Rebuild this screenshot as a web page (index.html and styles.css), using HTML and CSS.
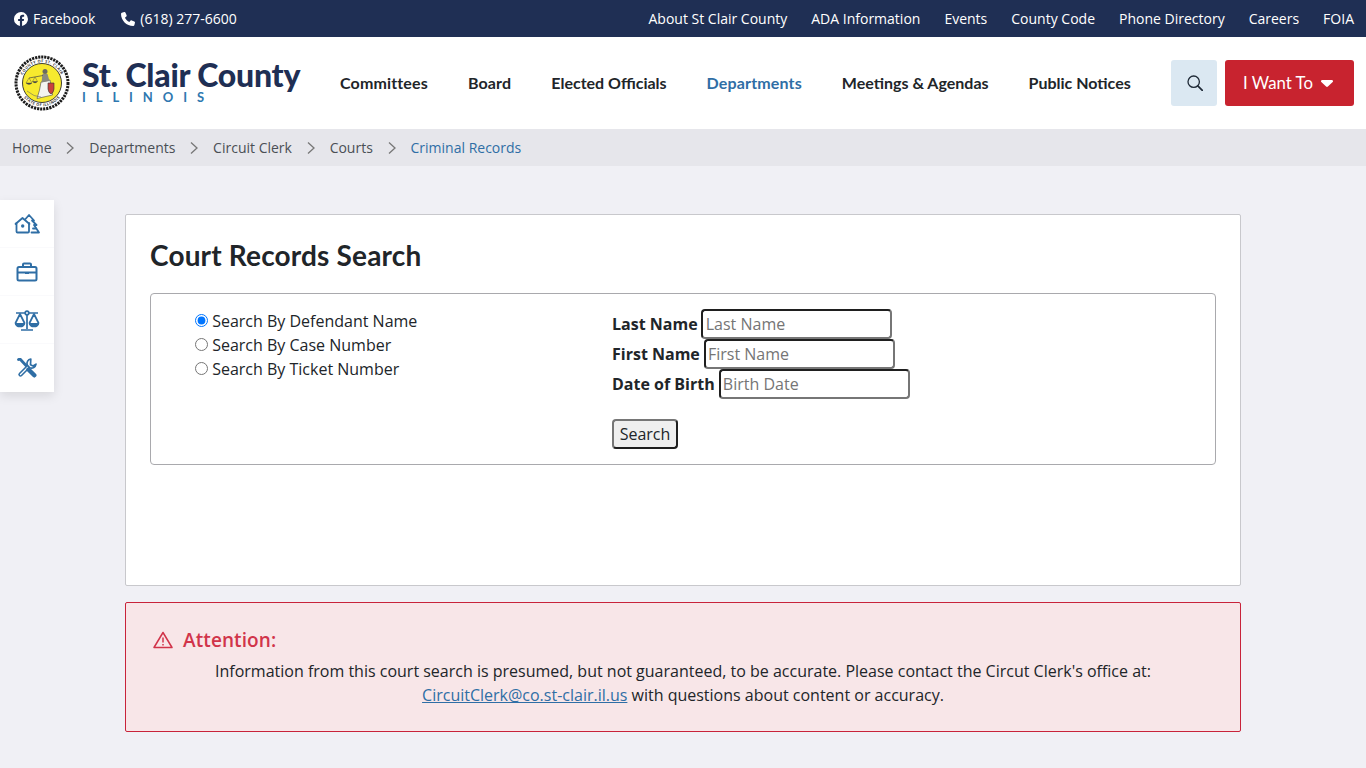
FILE: index.html
```html
<!DOCTYPE html>
<html lang="en">
<head>
    <meta charset="UTF-8">
    <meta name="viewport" content="width=device-width, initial-scale=1.0">
    <title>Court Records Search - St. Clair County</title>
    <link rel="stylesheet" href="styles.css">
</head>
<body>
    <div class="topbar">
        <div class="topbar-left">
            <a href="#" class="top-link">
                <svg class="top-icon" viewBox="0 0 16 16"><path fill="#fff" d="M16 8.05A8 8 0 1 0 6.75 16v-5.62H4.72V8.05h2.03V6.28c0-2.02 1.19-3.13 3.02-3.13.88 0 1.8.16 1.8.16v1.98h-1.01c-1 0-1.31.62-1.31 1.26v1.5h2.22l-.35 2.33H9.25V16A8.03 8.03 0 0 0 16 8.05z"/></svg>
                Facebook
            </a>
            <a href="#" class="top-link">
                <svg class="top-icon phone" viewBox="0 0 512 512"><path fill="#fff" d="M164.900 24.600c-7.700-18.600-28-28.500-47.400-23.200l-88 24C12.100 30.200 0 46 0 64c0 247.400 200.600 448 448 448 18 0 33.800-12.100 38.600-29.500l24-88c5.300-19.400-4.600-39.700-23.200-47.400l-96-40c-16.300-6.800-35.200-2.100-46.300 11.600L304.700 368C234.300 334.700 177.300 277.700 144 207.300l49.300-40.300c13.700-11.200 18.400-30 11.600-46.300l-40-96z"/></svg>
                (618) 277-6600
            </a>
        </div>
        <div class="topbar-right">
            <a href="#" class="top-link">About St Clair County</a>
            <a href="#" class="top-link">ADA Information</a>
            <a href="#" class="top-link">Events</a>
            <a href="#" class="top-link">County Code</a>
            <a href="#" class="top-link">Phone Directory</a>
            <a href="#" class="top-link">Careers</a>
            <a href="#" class="top-link">FOIA</a>
        </div>
    </div>

    <header class="site-header">
        <a href="#" class="logo">
            <svg class="seal" viewBox="0 0 56 56">
                <circle cx="28" cy="28" r="26" fill="#fff" stroke="#1c1c1c" stroke-width="3" stroke-dasharray="2.200 .9"/>
                <circle cx="28" cy="28" r="19.500" fill="#f7ea2e" stroke="#2a2a2a" stroke-width=".9"/>
                <path fill="#f4f4f0" stroke="#444" stroke-width=".6" d="M27 27 L36 25 L38.500 40 L23 43.500 Q26 35 27 27 Z"/>
                <path fill="#8a8a80" d="M28.500 19 h5 l2 7 l-8 1.500 z"/>
                <circle cx="31" cy="16.500" r="2.500" fill="#6a6a60"/>
                <path fill="#c9403c" stroke="#333" stroke-width=".6" d="M34 28 h6 v6 q-.5 4 -3 5 q-2.500 -1 -3 -5 z"/>
                <path d="M15 23 L29 20.500" stroke="#444" stroke-width=".7"/>
                <path d="M15 23 l-3 5 h6 z M21 22 l-2.500 4.500 h5 z" fill="none" stroke="#444" stroke-width=".4"/>
                <path d="M12 28 q3 3 6 0 M18.500 26.500 q2.500 3 5 0" fill="#444" stroke="#444" stroke-width=".3"/>
                <path d="M13 36 Q20 42 27 42" fill="none" stroke="#666" stroke-width=".6"/>
                <path id="sealTop" d="M7.300 28 A20.700 20.700 0 0 1 48.700 28" fill="none"/>
                <path id="sealBottom" d="M4.800 28 A23.200 23.200 0 0 0 51.200 28" fill="none"/>
                <text class="seal-text"><textPath href="#sealTop" startOffset="50%" text-anchor="middle">COUNTY OF ST. CLAIR</textPath></text>
                <text class="seal-text"><textPath href="#sealBottom" startOffset="50%" text-anchor="middle">STATE OF ILLINOIS</textPath></text>
            </svg>
            <span class="logo-text">
                <span class="logo-name">St. Clair County</span>
                <span class="logo-state">ILLINOIS</span>
            </span>
        </a>
        <nav class="main-nav">
            <a href="#">Committees</a>
            <a href="#">Board</a>
            <a href="#" class="no-track">Elected Officials</a>
            <a href="#" class="active">Departments</a>
            <a href="#" class="no-track">Meetings &amp; Agendas</a>
            <a href="#" class="no-track">Public Notices</a>
        </nav>
        <div class="header-actions">
            <button class="search-btn" aria-label="Search">
                <svg viewBox="0 0 16 16" width="16" height="16" fill="none" stroke="#1f2a37" stroke-width="1.300"><circle cx="6.700" cy="6.700" r="5.700"/><path d="M10.800 10.800 L15.300 15.300" stroke-width="1.700" stroke-linecap="round"/></svg>
            </button>
            <button class="want-btn">I Want To
                <svg class="caret" viewBox="0 0 12 7" width="12" height="7"><path fill="#fff" d="M1.200 0 H10.800 C11.900 0 12.400 1.200 11.700 2 L6.900 6.600 C6.400 7.100 5.600 7.100 5.100 6.600 L.3 2 C-.4 1.200 .1 0 1.200 0 Z"/></svg>
            </button>
        </div>
    </header>

    <div class="breadcrumb">
        <a href="#">Home</a>
        <svg class="crumb-sep" viewBox="0 0 10 14"><path d="M2 1.500 L8 7 L2 12.500" fill="none" stroke="#777" stroke-width="1.300"/></svg>
        <a href="#">Departments</a>
        <svg class="crumb-sep" viewBox="0 0 10 14"><path d="M2 1.500 L8 7 L2 12.500" fill="none" stroke="#777" stroke-width="1.300"/></svg>
        <a href="#">Circuit Clerk</a>
        <svg class="crumb-sep" viewBox="0 0 10 14"><path d="M2 1.500 L8 7 L2 12.500" fill="none" stroke="#777" stroke-width="1.300"/></svg>
        <a href="#">Courts</a>
        <svg class="crumb-sep" viewBox="0 0 10 14"><path d="M2 1.500 L8 7 L2 12.500" fill="none" stroke="#777" stroke-width="1.300"/></svg>
        <span class="crumb-current">Criminal Records</span>
    </div>

    <aside class="side-menu">
        <a href="#" class="side-item">
            <svg viewBox="0 0 26 20" width="26" height="20" fill="none" stroke="#2f6ea5" stroke-width="1.800" stroke-linejoin="round" stroke-linecap="round">
                <path d="M1.500 10 L8.500 4 L15.500 10"/>
                <path d="M2.500 9 V17.500 a1 1 0 0 0 1 1 H14 a1 1 0 0 0 1 -1 V9"/>
                <circle cx="8.700" cy="12" r="1.700" fill="#2f6ea5" stroke="none"/>
                <path d="M11.500 5 L15 1 L20 6.500 H18 L22.500 11 H20 L25 18.500 H17.500"/>
                <path d="M19 14.500 H22"/>
            </svg>
        </a>
        <a href="#" class="side-item">
            <svg viewBox="0 0 22 20" width="22" height="20" fill="none" stroke="#2f6ea5" stroke-width="2" stroke-linejoin="round">
                <rect x="1.500" y="5" width="19" height="13.500" rx="1.500"/>
                <path d="M7 5 V2.500 a1 1 0 0 1 1 -1 H14 a1 1 0 0 1 1 1 V5 M1.500 10.500 H9 M13 10.500 H20.500"/>
                <rect x="9" y="9.500" width="4" height="2.500" fill="#2f6ea5" stroke="none"/>
            </svg>
        </a>
        <a href="#" class="side-item">
            <svg class="scale-icon" viewBox="0 0 26 22" width="26" height="22" fill="none" stroke="#2f6ea5" stroke-width="1.700" stroke-linejoin="round">
                <path d="M2 3 H24 M13 5 V19 M7 20 H19" />
                <circle cx="13" cy="3" r="1.800" fill="#fff"/>
                <path d="M6 4 L1.500 13 a4.500 3.500 0 0 0 9 0 Z M20 4 L15.500 13 a4.500 3.500 0 0 0 9 0 Z"/>
                <path d="M2 13 H10 V14 a4 3 0 0 1 -8 0 Z M16 13 H24 V14 a4 3 0 0 1 -8 0 Z" fill="#2f6ea5" stroke="none"/>
            </svg>
        </a>
        <a href="#" class="side-item">
            <svg viewBox="0 0 20 20" width="20" height="20" fill="none" stroke="#2f6ea5" stroke-linecap="round" stroke-linejoin="round">
                <path d="M3.500 16.500 L11.500 8.500" stroke-width="4.400"/>
                <path d="M3.500 16.500 L11.500 8.500" stroke="#fff" stroke-width="1.300"/>
                <path fill="#fff" stroke-width="1.700" d="M13.800 1 A4.600 4.600 0 0 0 10.200 7 L12.800 9.800 A4.600 4.600 0 0 0 19 6.200 L16 8 L13.500 6.700 Z"/>
                <path d="M1.500 1.500 L3 1 L9 7.500" stroke-width="2.800"/>
                <path d="M11.500 11.500 L17.300 17.300" stroke-width="4.400"/>
            </svg>
        </a>
    </aside>

    <main class="content">
        <section class="card">
            <h1>Court Records Search</h1>
            <div class="search-box">
                <div class="search-types">
                    <label><input type="radio" name="searchBy" checked> Search By Defendant Name</label>
                    <label><input type="radio" name="searchBy"> Search By Case Number</label>
                    <label><input type="radio" name="searchBy"> Search By Ticket Number</label>
                </div>
                <form class="search-fields">
                    <div class="field field-last"><label>Last Name</label> <input type="text" placeholder="Last Name"></div>
                    <div class="field"><label>First Name</label> <input type="text" placeholder="First Name"></div>
                    <div class="field"><label>Date of Birth</label> <input type="text" placeholder="Birth Date"></div>
                    <button type="button" class="submit-btn">Search</button>
                </form>
            </div>
        </section>

        <section class="attention">
            <h2>
                <svg viewBox="0 0 20 18" width="20" height="18" fill="none" stroke="#d1344a" stroke-width="1.500" stroke-linejoin="round"><path d="M10 1.500 L19 16.500 H1 Z"/><path d="M10 6.500 V11.500 M10 13 V14.500"/></svg>
                Attention:
            </h2>
            <p>Information from this court search is presumed, but not guaranteed, to be accurate. Please contact the Circut Clerk's office at:<br><a href="#">CircuitClerk@co.st-clair.il.us</a> with questions about content or accuracy.</p>
        </section>
    </main>
</body>
</html>
```

FILE: styles.css
```css
body {
    margin: 0;
    background-color: #f0f0f5;
    color: #212529;
    font-family: "Open Sans", sans-serif;
    font-size: 16px;
    line-height: 24px;
}

a {
    text-decoration: none;
    color: inherit;
}

/* top bar */
.topbar {
    display: flex;
    justify-content: space-between;
    align-items: center;
    height: 37px;
    padding: 0 12px 0 14px;
    background-color: #1f2f54;
}

.topbar-left, .topbar-right {
    display: flex;
    align-items: center;
}

.topbar-left {
    gap: 26px;
}

.topbar-right {
    gap: 24px;
}

.top-link {
    display: flex;
    align-items: center;
    gap: 5px;
    color: #fff;
    font-size: 14px;
    line-height: 20px;
}

.top-icon {
    width: 14px;
    height: 14px;
}

/* main header */
.site-header {
    display: flex;
    align-items: center;
    height: 92px;
    padding: 0 12px 0 14px;
    background-color: #fff;
}

.logo {
    display: flex;
    align-items: center;
    gap: 12px;
    width: 326px;
    flex-shrink: 0;
}

.seal {
    width: 56px;
    height: 56px;
    flex-shrink: 0;
}

.seal-text {
    font-family: "Open Sans", sans-serif;
    font-size: 3.800px;
    font-weight: 700;
    letter-spacing: 0.4px;
    fill: #333;
}

.logo-text {
    display: flex;
    flex-direction: column;
    padding-bottom: 2px;
}

.logo-name {
    color: #1f2f54;
    font-family: Lato, sans-serif;
    font-size: 32px;
    font-weight: 900;
    line-height: 30px;
    letter-spacing: -0.2px;
    white-space: nowrap;
}

.logo-state {
    margin-top: 1px;
    color: #2f78b0;
    font-family: Lato, sans-serif;
    font-size: 13px;
    font-weight: 700;
    line-height: 13px;
    letter-spacing: 9.900px;
}

.main-nav {
    display: flex;
    gap: 40px;
}

.main-nav a {
    color: #212529;
    font-family: Lato, sans-serif;
    font-size: 16px;
    font-weight: 700;
    letter-spacing: 0.15px;
    white-space: nowrap;
}

.main-nav a.no-track {
    letter-spacing: 0;
}

.main-nav a.active {
    color: #2f6ea5;
}

.header-actions {
    display: flex;
    gap: 8px;
    margin-left: auto;
}

.search-btn {
    display: flex;
    align-items: center;
    justify-content: center;
    width: 46px;
    height: 46px;
    padding: 0 0 0 2px;
    border: 0;
    border-radius: 3px;
    background-color: #dbe8f2;
}

.want-btn {
    display: flex;
    align-items: center;
    justify-content: center;
    gap: 8px;
    width: 129px;
    height: 46px;
    padding: 0 3px 2px 0;
    border: 0;
    border-radius: 3px;
    background-color: #c8232f;
    color: #fff;
    font-family: Lato, sans-serif;
    font-size: 16.800px;
}

.caret {
    margin-top: 3px;
}

/* breadcrumb */
.breadcrumb {
    display: flex;
    align-items: center;
    gap: 13.850px;
    height: 37px;
    padding-left: 12px;
    background-color: #e6e6eb;
    color: #4a4f55;
    font-size: 14px;
}

.crumb-sep {
    width: 10px;
    height: 14px;
}

.crumb-current {
    color: #2f6ea5;
}

/* side icons */
.side-menu {
    position: absolute;
    left: 0;
    top: 200px;
    width: 54px;
    background-color: #fff;
    box-shadow: 0 4px 10px rgba(0, 0, 0, 0.1);
}

.side-item {
    display: flex;
    align-items: center;
    justify-content: center;
    height: 48px;
    border-bottom: 1px solid #fafafc;
    box-sizing: border-box;
}

.side-item:last-child {
    border-bottom: 0;
}

.scale-icon {
    margin-top: 2px;
}

/* page content */
.content {
    width: 1116px;
    margin: 48px auto 0;
    padding-bottom: 36px;
}

.card {
    box-sizing: border-box;
    height: 372px;
    padding: 24px;
    border: 1px solid #c8c8cc;
    border-radius: 2px;
    background-color: #fff;
}

.card h1 {
    margin: 0 0 22px;
    color: #212529;
    font-family: Lato, sans-serif;
    font-size: 28px;
    font-weight: 700;
    line-height: 32px;
    letter-spacing: 0.17px;
}

.search-box {
    display: flex;
    box-sizing: border-box;
    height: 172px;
    padding: 15px 0 0 44px;
    border: 1px solid #a9a9ad;
    border-radius: 4px;
}

.search-types {
    display: flex;
    flex-direction: column;
    width: 417px;
}

.search-types input {
    width: 13px;
    height: 13px;
    margin: 0;
}

.search-fields {
    display: flex;
    flex-direction: column;
    align-items: flex-start;
}

.field {
    height: 30px;
    white-space: nowrap;
    font-size: 16px;
}

.field label {
    font-weight: 700;
}

.field input {
    box-sizing: border-box;
    width: 191px;
    height: 30px;
    padding: 1px 2px;
    border: 2px solid;
    border-color: #1f1f1f #767676 #767676 #1f1f1f;
    border-radius: 4px;
    font-family: "Open Sans", sans-serif;
    font-size: 16px;
}

.field-last input {
    margin-left: -1px;
    padding-left: 3px;
}

.field input::placeholder {
    color: #757575;
}

.submit-btn {
    width: 66px;
    height: 30px;
    margin-top: 20px;
    padding: 1px 0;
    border: 2px solid;
    border-color: #767676 #1f1f1f #1f1f1f #767676;
    border-radius: 4px;
    background-color: #efefef;
    color: #212529;
    font-family: "Open Sans", sans-serif;
    font-size: 16px;
}

/* attention box */
.attention {
    box-sizing: border-box;
    height: 130px;
    margin-top: 16px;
    padding: 24px 24px 0;
    border: 1px solid #c8233a;
    border-radius: 2px;
    background-color: #f8e6e8;
    text-align: center;
}

.attention h2 {
    display: flex;
    align-items: center;
    gap: 10px;
    margin: 0 0 6px 3px;
    color: #d1344a;
    font-family: "Open Sans", sans-serif;
    font-size: 19px;
    font-weight: 600;
    line-height: 26px;
    letter-spacing: 0.1px;
}

.attention p {
    margin: 0;
}

.attention a {
    color: #2f6ea5;
    text-decoration: underline;
}
```
